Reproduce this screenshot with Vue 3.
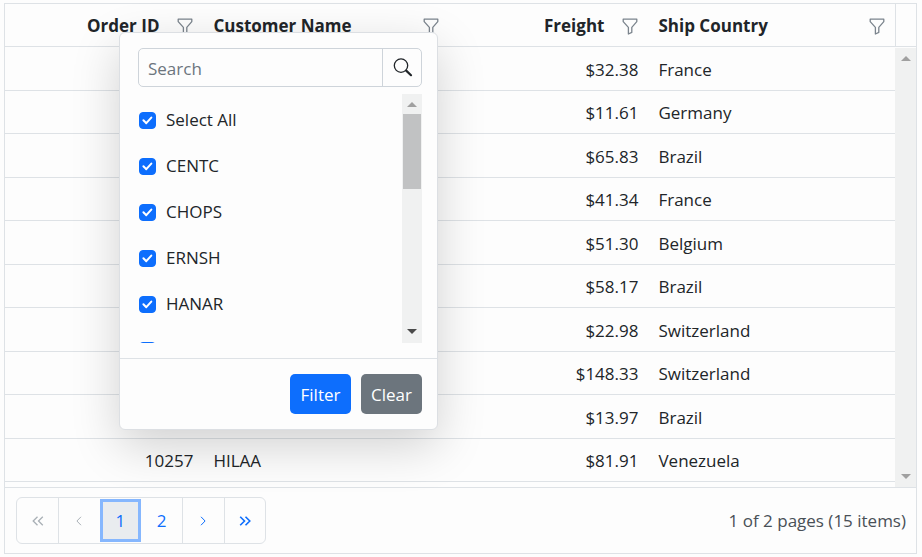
<script setup>
import { ref } from 'vue'

const columns = [
  { key: 'id', label: 'Order ID', right: true },
  { key: 'name', label: 'Customer Name', right: false },
  { key: 'freight', label: 'Freight', right: true },
  { key: 'country', label: 'Ship Country', right: false },
]

const orders = [
  { id: '', name: '', freight: '$32.38', country: 'France' },
  { id: '', name: '', freight: '$11.61', country: 'Germany' },
  { id: '', name: '', freight: '$65.83', country: 'Brazil' },
  { id: '', name: '', freight: '$41.34', country: 'France' },
  { id: '', name: '', freight: '$51.30', country: 'Belgium' },
  { id: '', name: '', freight: '$58.17', country: 'Brazil' },
  { id: '', name: '', freight: '$22.98', country: 'Switzerland' },
  { id: '', name: '', freight: '$148.33', country: 'Switzerland' },
  { id: '', name: '', freight: '$13.97', country: 'Brazil' },
  { id: '10257', name: 'HILAA', freight: '$81.91', country: 'Venezuela' },
]

const options = ref(
  ['Select All', 'CENTC', 'CHOPS', 'ERNSH', 'HANAR', 'HILAA'].map((label) => ({ label, checked: true })),
)
const query = ref('')
</script>

<template>
  <main class="page">
    <section class="grid">
      <div class="content">
        <table class="table">
          <colgroup>
            <col class="col-id" />
            <col class="col-name" />
            <col class="col-freight" />
            <col class="col-country" />
          </colgroup>
          <thead>
            <tr>
              <th v-for="c in columns" :key="c.key" scope="col">
                <div class="head" :class="{ right: c.right }">
                  <span class="head-label">{{ c.label }}</span>
                  <button class="funnel" type="button" :aria-label="'Filter ' + c.label">
                    <svg viewBox="0 0 16 17" width="16" height="17">
                      <path d="M1.2 1.2h13.6v2.4L9.8 9.4v5L6.4 16V9.4L1.2 3.6z" />
                    </svg>
                  </button>
                </div>
              </th>
            </tr>
          </thead>
          <tbody>
            <tr v-for="(o, i) in orders" :key="i">
              <td class="right">{{ o.id }}</td>
              <td>{{ o.name }}</td>
              <td class="right">{{ o.freight }}</td>
              <td>{{ o.country }}</td>
            </tr>
          </tbody>
        </table>
        <div class="side" aria-hidden="true">
          <div class="side-head"></div>
          <div class="track">
            <svg class="arrow" viewBox="0 0 10 5" width="10" height="5"><path d="M0 5 5 0l5 5z" fill="#a0a0a0" /></svg>
            <svg class="arrow" viewBox="0 0 10 5" width="10" height="5"><path d="M0 0h10L5 5z" fill="#a0a0a0" /></svg>
          </div>
        </div>
      </div>

      <footer class="footer">
        <nav class="pager" aria-label="Pages">
          <button type="button" disabled aria-label="First page">
            <svg viewBox="0 0 12 10" width="12" height="10"><path d="M5.5.7 1.2 5l4.3 4.3M10.8.7 6.5 5l4.3 4.3" stroke-width="1.3" /></svg>
          </button>
          <button type="button" disabled aria-label="Previous page">
            <svg viewBox="0 0 6 10" width="6" height="10"><path d="M5 .8.9 5 5 9.2" /></svg>
          </button>
          <button type="button" class="current" aria-current="page">1</button>
          <button type="button" class="number">2</button>
          <button type="button" aria-label="Next page">
            <svg viewBox="0 0 6 10" width="6" height="10"><path d="M1 .8 5.1 5 1 9.2" /></svg>
          </button>
          <button type="button" aria-label="Last page">
            <svg viewBox="0 0 12 10" width="12" height="10"><path d="M1.2.7 5.5 5 1.2 9.3M6.5.7 10.8 5 6.5 9.3" stroke-width="1.6" /></svg>
          </button>
        </nav>
        <span class="summary">1 of 2 pages (15 items)</span>
      </footer>

      <div class="popup" role="dialog" aria-label="Customer Name filter">
        <div class="body">
          <div class="search">
            <input v-model="query" type="text" placeholder="Search" aria-label="Search" />
            <button type="button" aria-label="Search values">
              <svg viewBox="0 0 20 20" width="20" height="20">
                <circle cx="8" cy="7.6" r="6.7" stroke-width="1.3" />
                <path d="m13.2 12.6 4.8 4.6" stroke-width="2.2" />
              </svg>
            </button>
          </div>
          <div class="list">
            <div class="options">
              <label v-for="o in options" :key="o.label" class="option">
                <span class="box">
                  <input v-model="o.checked" type="checkbox" />
                  <svg viewBox="0 0 17 17" width="17" height="17"><path d="m4.4 8.2 2.9 3 5-5.6" /></svg>
                </span>
                <span>{{ o.label }}</span>
              </label>
            </div>
            <div class="list-track" aria-hidden="true">
              <svg class="arrow" viewBox="0 0 10 5" width="10" height="5"><path d="M0 5 5 0l5 5z" fill="#a0a0a0" /></svg>
              <div class="thumb"></div>
              <svg class="arrow" viewBox="0 0 10 5" width="10" height="5"><path d="M0 0h10L5 5z" fill="#4a4a4a" /></svg>
            </div>
          </div>
        </div>
        <div class="actions">
          <button type="button" class="primary">Filter</button>
          <button type="button" class="secondary">Clear</button>
        </div>
      </div>
    </section>
  </main>
</template>

<style>
body {
  background: #fdfdfd;
}
</style>

<style scoped>
* {
  box-sizing: border-box;
}

.page {
  padding: 3px 5px 3px 4px;
  color: #212529;
  font: 17px/24px "Open Sans", "Noto Sans", sans-serif;
}

button,
input {
  margin: 0;
  font: inherit;
}

svg {
  display: block;
}

.grid {
  position: relative;
  border: 1px solid #dee2e6;
}

.content {
  display: flex;
}

.table {
  flex: 1;
  min-width: 0;
  width: 100%;
  table-layout: fixed;
  border-collapse: separate;
  border-spacing: 0;
}

.col-id {
  width: 22.3%;
}

.col-name {
  width: 27.6%;
}

.col-freight {
  width: 22.4%;
}

th,
td {
  height: 44px;
  padding: 2px 10px 0;
  border-bottom: 1px solid #dee2e6;
  text-align: left;
  white-space: nowrap;
}

th {
  height: 43px;
}

tbody tr:nth-child(even) td {
  height: 43px;
}

td.right {
  text-align: right;
}

.head {
  display: flex;
  align-items: center;
  gap: 18px;
}

.head-label {
  flex: 1;
}

.head.right .head-label {
  text-align: right;
}

.funnel {
  padding: 0;
  border: 0;
  background: none;
}

.funnel path {
  fill: none;
  stroke: #7b848d;
  stroke-width: 1.3;
  stroke-linejoin: round;
}

.side {
  display: flex;
  flex-direction: column;
  width: 21px;
}

.side-head {
  height: 43px;
  border-bottom: 1px solid #dee2e6;
  border-left: 1px solid #dee2e6;
}

.track,
.list-track {
  display: flex;
  flex-direction: column;
  align-items: center;
  background: #f0f1f1;
}

.track {
  flex: 1;
  justify-content: space-between;
  margin: 1px 0 -5px;
  padding: 8px 0;
}

.footer {
  display: flex;
  align-items: center;
  justify-content: space-between;
  margin-top: 5px;
  padding: 9px 10px 9px 11px;
  border-top: 1px solid #dee2e6;
}

.pager {
  display: grid;
  grid-template-columns: repeat(6, 1fr);
  width: 250px;
  height: 47px;
  border: 1px solid #dee2e6;
  border-radius: 6px;
}

.pager button {
  display: flex;
  align-items: center;
  justify-content: center;
  padding: 0;
  border: 0;
  border-left: 1px solid #dee2e6;
  background: none;
  color: #0d6efd;
}

.pager button:first-child,
.pager .number {
  border-left: 0;
}

.pager button:disabled {
  color: #a9b0b6;
}

.pager .current {
  margin: 1px 0;
  border: 3px solid #86b7fe;
  background: #e9ecef;
}

.pager path {
  fill: none;
  stroke: currentColor;
}

.summary {
  color: #495057;
}

.popup {
  position: absolute;
  top: 28px;
  left: 114px;
  width: 319px;
  border: 1px solid #dcdfe3;
  border-radius: 6px;
  background: #fdfdfd;
  box-shadow: 0 16px 48px rgba(0, 0, 0, 0.175);
}

.body {
  padding: 15px 15px 15px 18px;
}

.search {
  display: flex;
  height: 39px;
  border: 1px solid #ced4da;
  border-radius: 5px;
}

.search input {
  flex: 1;
  min-width: 0;
  padding: 2px 9px 0;
  border: 0;
  outline: 0;
  background: none;
  color: inherit;
}

.search input::placeholder {
  color: #6c757d;
  opacity: 1;
}

.search button {
  width: 39px;
  padding: 0 0 0 10px;
  border: 0;
  border-left: 1px solid #ced4da;
  background: none;
}

.search svg {
  fill: none;
  stroke: #212529;
  stroke-linecap: round;
}

.list {
  display: flex;
  height: 249px;
  margin-top: 7px;
  overflow: hidden;
}

.options {
  flex: 1;
  padding-top: 3px;
}

.option {
  display: flex;
  align-items: center;
  gap: 10px;
  height: 46px;
  padding-left: 1px;
}

.box {
  display: grid;
}

.box > * {
  grid-area: 1 / 1;
}

.box input {
  width: 17px;
  height: 17px;
  border: 1px solid #adb5bd;
  border-radius: 4px;
  appearance: none;
}

.box input:checked {
  border-color: #0d6efd;
  background: #0d6efd;
}

.box svg {
  fill: none;
  stroke: #fff;
  stroke-width: 2;
  stroke-linecap: round;
  stroke-linejoin: round;
  pointer-events: none;
}

.list-track {
  width: 20px;
  padding: 8px 0 9px;
}

.thumb {
  width: 18px;
  height: 75px;
  margin: 7px 0 auto;
  background: #c1c2c3;
}

.actions {
  display: flex;
  justify-content: flex-end;
  gap: 10px;
  padding: 15px;
  border-top: 1px solid #dee2e6;
}

.actions button {
  width: 61px;
  height: 40px;
  padding: 2px 0 0;
  border: 0;
  border-radius: 5px;
  color: #fff;
}

.primary {
  background: #0d6efd;
}

.secondary {
  background: #6c757d;
}
</style>
